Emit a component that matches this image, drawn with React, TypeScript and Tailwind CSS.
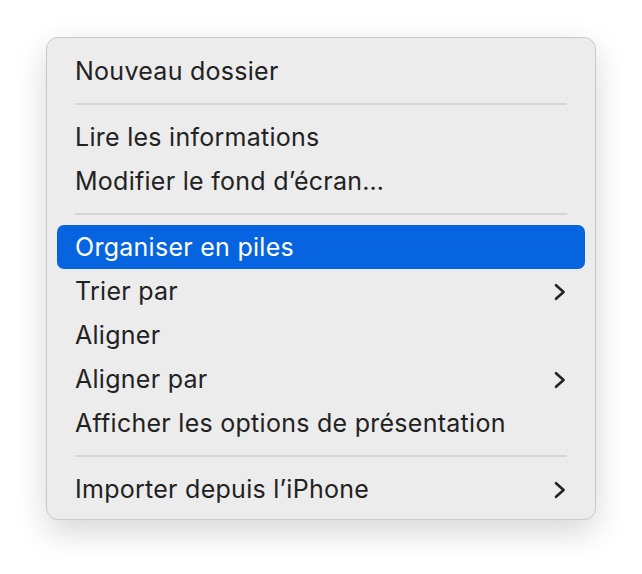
type Item = { label: string; sub?: boolean; active?: boolean } | 'sep'

const items: Item[] = [
  { label: 'Nouveau dossier' },
  'sep',
  { label: 'Lire les informations' },
  { label: 'Modifier le fond d’écran…' },
  'sep',
  { label: 'Organiser en piles', active: true },
  { label: 'Trier par', sub: true },
  { label: 'Aligner' },
  { label: 'Aligner par', sub: true },
  { label: 'Afficher les options de présentation' },
  'sep',
  { label: 'Importer depuis l’iPhone', sub: true },
]

function Chevron() {
  return (
    <svg width="12" height="18" viewBox="0 0 12 18" fill="none">
      <path d="M2 2.2 L9.6 9 L2 15.8" stroke="currentColor" strokeWidth="2.6" strokeLinecap="round" strokeLinejoin="round" />
    </svg>
  )
}

export default function App() {
  return (
    <div className="h-[574px] w-[642px] bg-white pl-[46px] pt-[37px] font-['Inter',sans-serif]">
      <div className="w-[550px] rounded-[12px] border border-[#c9c9c9] bg-[#ececec] px-[10px] pb-[8px] pt-[11px] shadow-[0_12px_32px_rgba(0,0,0,0.16)]">
        {items.map((it, i) =>
          it === 'sep' ? (
            <div key={i} className="flex h-[22px] items-center px-[18px]">
              <div className="h-[2px] w-full bg-[#d6d6d6]" />
            </div>
          ) : (
            <div
              key={i}
              className={`flex h-[44px] items-center justify-between rounded-[7px] pl-[18px] pr-[19px] pt-[2px] text-[25px] tracking-[0.27px] ${
                it.active ? 'bg-[#0764e1] text-white' : 'text-[#222222]'
              }`}
            >
              <span>{it.label}</span>
              {it.sub && <Chevron />}
            </div>
          ),
        )}
      </div>
    </div>
  )
}
